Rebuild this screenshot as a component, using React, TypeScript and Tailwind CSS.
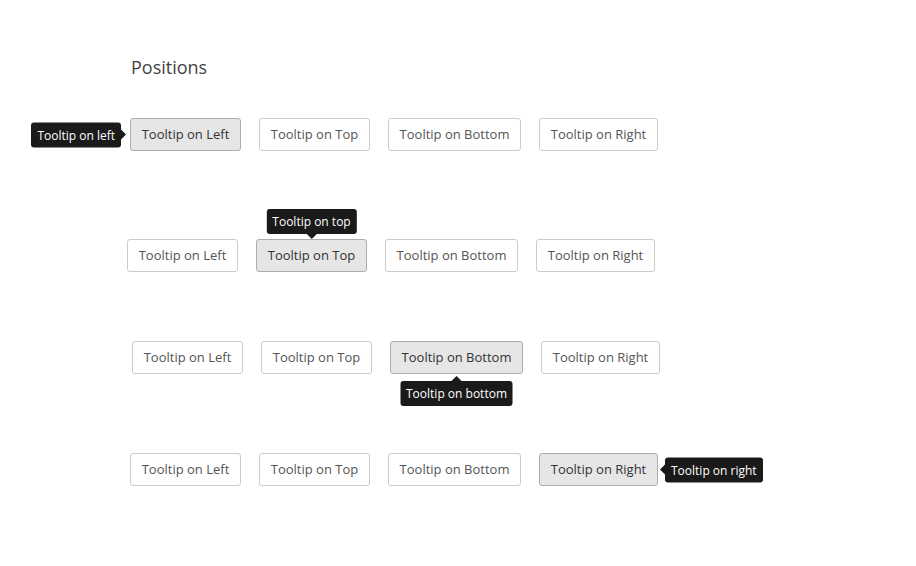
import React from 'react';

type Side = 'left' | 'top' | 'bottom' | 'right';

interface ButtonSpec {
  label: string;
  width: string;
}

const buttons: ButtonSpec[] = [
  { label: 'Tooltip on Left', width: 'w-[111px]' },
  { label: 'Tooltip on Top', width: 'w-[111px]' },
  { label: 'Tooltip on Bottom', width: 'w-[133px]' },
  { label: 'Tooltip on Right', width: 'w-[119px]' },
];

const Tip: React.FC<{ side: Side; text: string }> = ({ side, text }) => {
  const box =
    'absolute z-10 whitespace-nowrap rounded-[3px] bg-[#1a1a1a] px-[6px] py-[3px] text-[12px] leading-[19px] text-white';
  if (side === 'left') {
    return (
      <div className={`${box} right-full top-1/2 mr-[9px] -translate-y-1/2`}>
        {text}
        <span className="absolute left-full top-1/2 -translate-y-1/2 border-y-[5px] border-l-[5px] border-y-transparent border-l-[#1a1a1a]" />
      </div>
    );
  }
  if (side === 'right') {
    return (
      <div className={`${box} left-full top-1/2 ml-[7px] -translate-y-1/2`}>
        {text}
        <span className="absolute right-full top-1/2 -translate-y-1/2 border-y-[5px] border-r-[5px] border-y-transparent border-r-[#1a1a1a]" />
      </div>
    );
  }
  if (side === 'top') {
    return (
      <div className={`${box} bottom-full left-1/2 mb-[5px] -translate-x-1/2`}>
        {text}
        <span className="absolute left-1/2 top-full -translate-x-1/2 border-x-[5px] border-t-[5px] border-x-transparent border-t-[#1a1a1a]" />
      </div>
    );
  }
  return (
    <div className={`${box} left-1/2 top-full mt-[7px] -translate-x-1/2`}>
      {text}
      <span className="absolute bottom-full left-1/2 -translate-x-1/2 border-x-[5px] border-b-[5px] border-x-transparent border-b-[#1a1a1a]" />
    </div>
  );
};

const Row: React.FC<{ active: number; side: Side; className: string }> = ({ active, side, className }) => (
  <div className={`flex gap-[18px] ${className}`}>
    {buttons.map((b, i) => (
      <div key={b.label} className="relative">
        <button
          type="button"
          className={`${b.width} h-[33px] rounded-[3px] border text-center text-[13px] ${
            i === active ? 'border-[#adadad] bg-[#e6e6e6] text-[#333]' : 'border-[#ccc] bg-white text-[#555]'
          }`}
        >
          {b.label}
        </button>
        {i === active && <Tip side={side} text={`Tooltip on ${side}`} />}
      </div>
    ))}
  </div>
);

export default function App() {
  return (
    <div className="min-h-[566px] w-[916px] bg-white pl-[130px] pt-[54px] font-['Open_Sans',sans-serif]">
      <h2 className="ml-[1px] text-[18px] leading-[26px] text-[#444]">Positions</h2>
      <Row active={0} side="left" className="mt-[38px]" />
      <Row active={1} side="top" className="-ml-[3px] mt-[88px]" />
      <Row active={2} side="bottom" className="ml-[2px] mt-[69px]" />
      <Row active={3} side="right" className="mt-[79px]" />
    </div>
  );
}
